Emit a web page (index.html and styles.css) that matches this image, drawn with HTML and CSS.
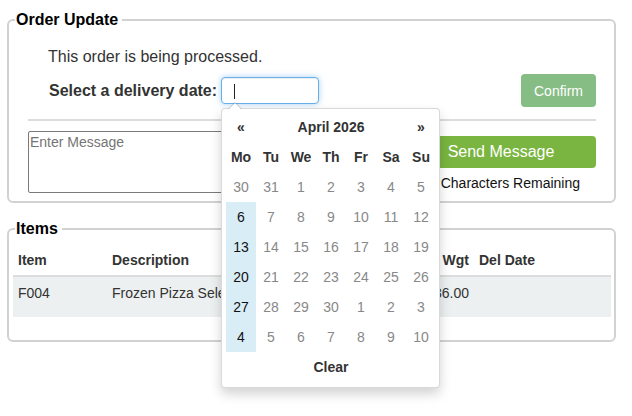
FILE: index.html
```html
<!DOCTYPE html>
<html lang="en">
<head>
<meta charset="utf-8">
<title>Order Update</title>
<link rel="stylesheet" href="styles.css">
</head>
<body>
<div class="page">
  <fieldset class="box box-order">
    <legend>Order Update</legend>
    <div class="order-body">
      <p class="status">This order is being processed.</p>
      <div class="date-row">
        <label class="date-label">Select a delivery date:</label>
        <div class="date-input"><span class="caret"></span></div>
        <button class="btn-confirm" type="button">Confirm</button>
      </div>
      <hr class="sep">
      <div class="msg-row">
        <textarea class="msg" placeholder="Enter Message"></textarea>
        <div class="msg-side">
          <button class="btn-send" type="button">Send Message</button>
          <div class="remaining">500 Characters Remaining</div>
        </div>
      </div>
    </div>
  </fieldset>

  <fieldset class="box box-items">
    <legend>Items</legend>
    <table class="items">
      <colgroup>
        <col class="c-item"><col class="c-desc"><col class="c-qty"><col class="c-price"><col class="c-wgt"><col class="c-date">
      </colgroup>
      <thead>
        <tr><th>Item</th><th>Description</th><th>Qty</th><th>Price</th><th class="num">Wgt</th><th>Del Date</th></tr>
      </thead>
      <tbody>
        <tr><td>F004</td><td>Frozen Pizza Selection</td><td>4</td><td>24.00</td><td class="num">36.00</td><td></td></tr>
      </tbody>
    </table>
  </fieldset>

  <div class="datepicker">
    <div class="dp-grid">
      <div class="dp-nav">&laquo;</div>
      <div class="dp-title">April 2026</div>
      <div class="dp-nav">&raquo;</div>
      <div class="dow">Mo</div><div class="dow">Tu</div><div class="dow">We</div><div class="dow">Th</div><div class="dow">Fr</div><div class="dow">Sa</div><div class="dow">Su</div>
      <div class="day">30</div><div class="day">31</div><div class="day">1</div><div class="day">2</div><div class="day">3</div><div class="day">4</div><div class="day">5</div>
      <div class="day on">6</div><div class="day">7</div><div class="day">8</div><div class="day">9</div><div class="day">10</div><div class="day">11</div><div class="day">12</div>
      <div class="day on">13</div><div class="day">14</div><div class="day">15</div><div class="day">16</div><div class="day">17</div><div class="day">18</div><div class="day">19</div>
      <div class="day on">20</div><div class="day">21</div><div class="day">22</div><div class="day">23</div><div class="day">24</div><div class="day">25</div><div class="day">26</div>
      <div class="day on">27</div><div class="day">28</div><div class="day">29</div><div class="day">30</div><div class="day">1</div><div class="day">2</div><div class="day">3</div>
      <div class="day on">4</div><div class="day">5</div><div class="day">6</div><div class="day">7</div><div class="day">8</div><div class="day">9</div><div class="day">10</div>
      <div class="dp-clear">Clear</div>
    </div>
  </div>
</div>
</body>
</html>
```

FILE: styles.css
```css
html, body {
  margin: 0;
  padding: 0;
  background: #fff;
}
body {
  font-family: "Liberation Sans", Arial, sans-serif;
  font-size: 14px;
  line-height: 20px;
  color: #333;
  min-height: 416px;
}
.page {
  position: relative;
  width: 609px;
  margin-left: 7px;
  padding-top: 11px;
}
.box {
  margin: 0;
  padding: 0;
  border: 2px solid #d2d2d2;
  border-radius: 6px;
  min-width: 0;
}
.box legend {
  font-size: 16px;
  font-weight: bold;
  line-height: 18px;
  color: #000;
  margin-left: 6px;
  padding: 0 4px 0 1px;
}
.box-items legend {
  margin-left: 2px;
}
.order-body {
  padding: 19px 18px 8px 19px;
}
.status {
  margin: 0 0 0 20px;
  font-size: 16px;
  line-height: 18px;
  color: #333;
}
.date-row {
  display: flex;
  align-items: center;
  margin-top: 8px;
  height: 33px;
}
.date-label {
  font-size: 16px;
  font-weight: bold;
  line-height: 18px;
  margin-left: 21px;
  margin-right: 4px;
  padding-top: 1px;
}
.date-input {
  box-sizing: border-box;
  width: 98px;
  height: 27px;
  border: 1px solid #66afe9;
  border-radius: 4px;
  box-shadow: inset 0 1px 1px rgba(0,0,0,.075), 0 0 6px rgba(102,175,233,.55);
  padding: 6px 0 0 12px;
  background: #fff;
}
.caret {
  display: block;
  width: 1px;
  height: 15px;
  background: #222;
}
.btn-confirm {
  margin-left: auto;
  box-sizing: border-box;
  width: 75px;
  height: 33px;
  border: 0;
  border-radius: 4px;
  background: #85bd85;
  color: #fff;
  font-family: "Liberation Sans", Arial, sans-serif;
  font-size: 14px;
  padding: 0;
}
.sep {
  margin: 12px 0 0;
  border: 0;
  border-top: 2px solid #dcdcdc;
  height: 0;
}
.msg-row {
  display: flex;
  margin-top: 10px;
}
.msg {
  flex: 1;
  box-sizing: border-box;
  height: 62px;
  margin: 0 10px 0 0;
  border: 1px solid #7a7a7a;
  border-radius: 2px;
  padding: 2px 1px;
  font-family: "Liberation Sans", Arial, sans-serif;
  font-size: 14px;
  line-height: 16px;
  resize: none;
}
.msg::placeholder {
  color: #757575;
}
.msg-side {
  width: 190px;
  padding-top: 5px;
}
.btn-send {
  display: block;
  width: 100%;
  height: 32px;
  border: 0;
  border-radius: 4px;
  background: #79b540;
  color: #fff;
  font-family: "Liberation Sans", Arial, sans-serif;
  font-size: 16px;
  padding: 0;
}
.remaining {
  margin-top: 5px;
  text-align: right;
  padding-right: 16px;
  color: #111;
  font-size: 14px;
  line-height: 20px;
}
.box-items {
  margin-top: 17px;
  padding: 2px 3px 23px 4px;
}
.items {
  width: 100%;
  border-collapse: collapse;
  table-layout: fixed;
}
.c-item { width: 94px; }
.c-desc { width: 180px; }
.c-qty { width: 70px; }
.c-price { width: 70px; }
.c-wgt { width: 47px; }
.c-date { width: 137px; }
.items th {
  text-align: left;
  font-weight: bold;
  padding: 10px 5px 5px;
  border-bottom: 2px solid #dcdcdc;
  white-space: nowrap;
  overflow: hidden;
}
.items td {
  padding: 6px 5px 14px;
  background: #ecf0f1;
  white-space: nowrap;
  overflow: hidden;
}
.items .num {
  text-align: right;
}
.datepicker {
  position: absolute;
  left: 214px;
  top: 108px;
  box-sizing: border-box;
  width: 219px;
  padding: 3px 4px 5px;
  background: #fff;
  border: 1px solid rgba(0,0,0,.15);
  border-radius: 4px;
  box-shadow: 0 6px 12px rgba(0,0,0,.175);
  z-index: 10;
}
.datepicker::before {
  content: "";
  position: absolute;
  top: -7px;
  left: 6px;
  border-left: 7px solid transparent;
  border-right: 7px solid transparent;
  border-bottom: 7px solid rgba(0,0,0,.2);
}
.datepicker::after {
  content: "";
  position: absolute;
  top: -6px;
  left: 7px;
  border-left: 6px solid transparent;
  border-right: 6px solid transparent;
  border-bottom: 6px solid #fff;
}
.dp-grid {
  display: grid;
  grid-template-columns: repeat(7, 30px);
  grid-auto-rows: 30px;
  text-align: center;
  line-height: 30px;
  font-size: 14px;
}
.dp-nav, .dp-title, .dow, .dp-clear {
  font-weight: bold;
  color: #333;
}
.dp-title {
  grid-column: span 5;
}
.dp-clear {
  grid-column: span 7;
}
.day {
  color: #888;
}
.day.on {
  background: #d9edf7;
  color: #111;
}
```
